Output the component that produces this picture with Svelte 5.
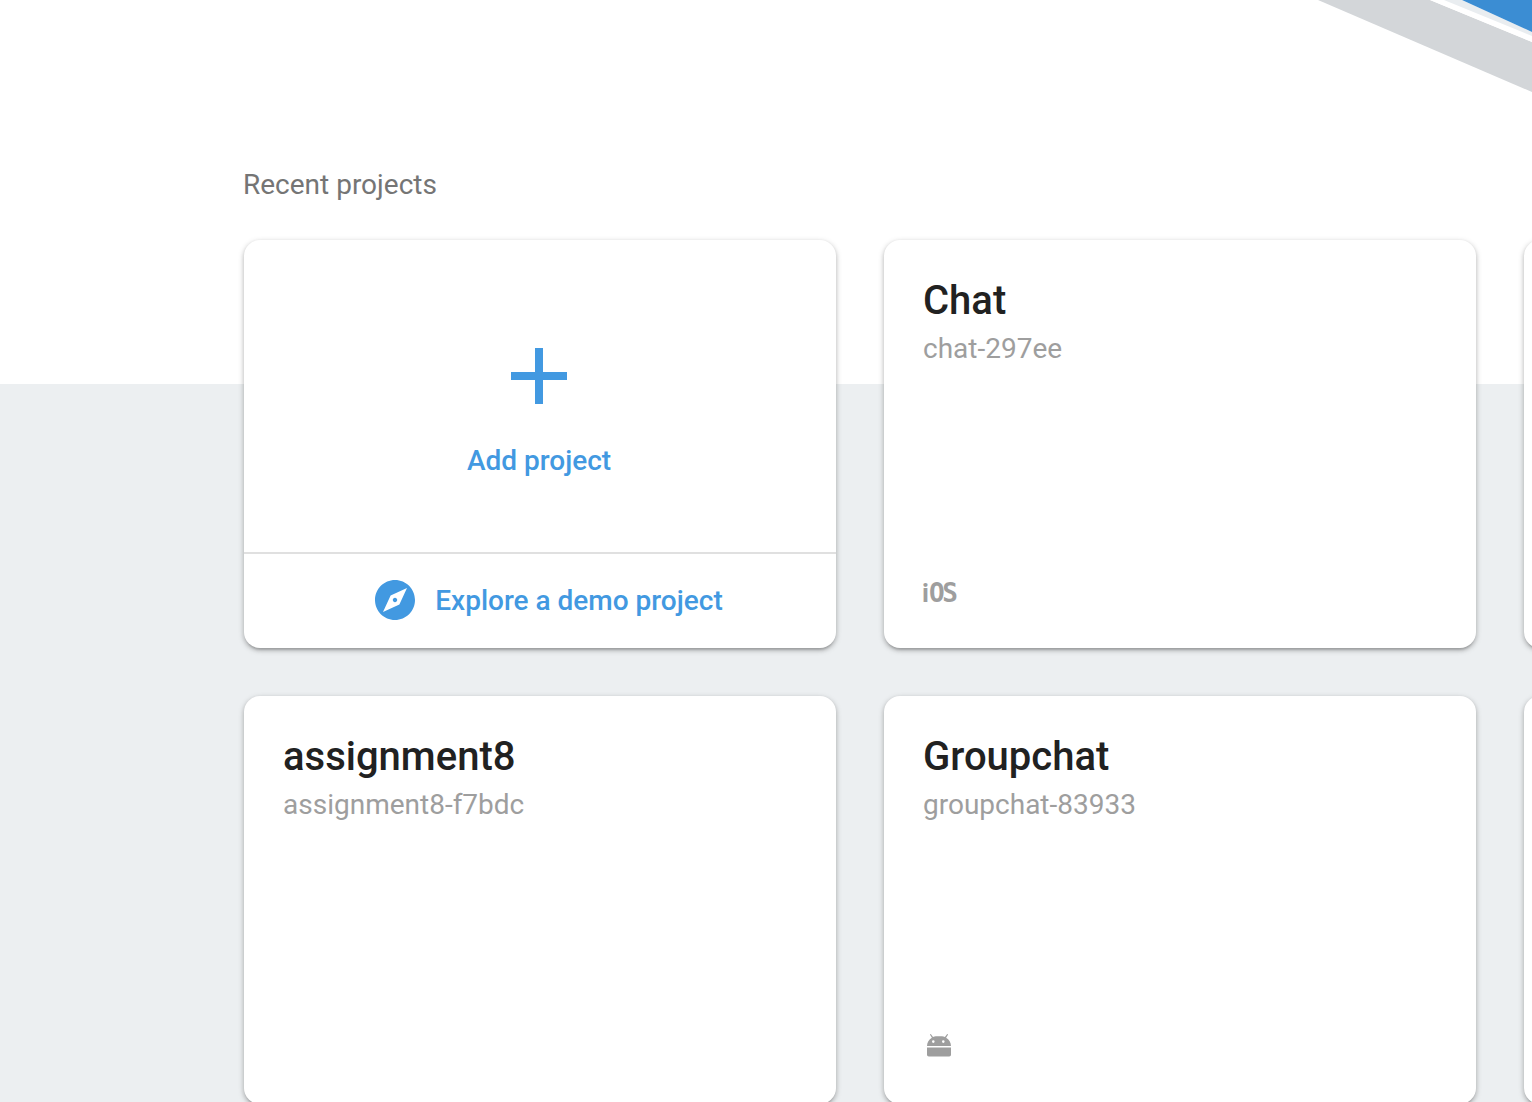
<script lang="ts">
  const projects = [
    { add: true },
    { name: "Chat", id: "chat-297ee", platform: "ios" },
    { name: "", id: "", platform: "" },
    { name: "assignment8", id: "assignment8-f7bdc", platform: "" },
    { name: "Groupchat", id: "groupchat-83933", platform: "android" },
    { name: "", id: "", platform: "" },
  ];
</script>

<div class="page">
  <svg class="swoosh" viewBox="0 0 252 110" width="252" height="110" aria-hidden="true">
    <polygon points="38,0 252,92 252,42 150,0" fill="#d3d6d9" />
    <polygon points="150,0 252,42 252,36 164,0" fill="#ffffff" />
    <polygon points="164,0 252,36 252,32 182,0" fill="#e9edf0" />
    <polygon points="182,0 252,32 252,0" fill="#3b8dd3" />
  </svg>

  <h1>Recent projects</h1>

  <div class="grid">
    {#each projects as project}
      {#if project.add}
        <div class="card add">
          <div class="add-main">
            <svg class="plus" viewBox="0 0 24 24" width="96" height="96"><path d="M19 13h-6v6h-2v-6H5v-2h6V5h2v6h6v2z" /></svg>
            <span>Add project</span>
          </div>
          <div class="demo">
            <svg viewBox="0 0 24 24" width="48" height="48"><path d="M12 10.9c-.61 0-1.1.49-1.1 1.1s.49 1.1 1.1 1.1c.61 0 1.1-.49 1.1-1.1s-.49-1.1-1.1-1.1zM12 2C6.48 2 2 6.48 2 12s4.48 10 10 10 10-4.48 10-10S17.52 2 12 2zm2.19 12.19L6 18l3.81-8.19L18 6l-3.81 8.19z" /></svg>
            <span>Explore a demo project</span>
          </div>
        </div>
      {:else}
        <div class="card">
          <div class="name">{project.name}</div>
          <div class="id">{project.id}</div>
          {#if project.platform === "ios"}
            <div class="platform ios"><span class="ios-i">i</span>OS</div>
          {:else if project.platform === "android"}
            <div class="platform android">
              <svg viewBox="0 0 32 32" width="32" height="32">
                <path d="M4 18c0-3.600 1.900-6.600 4.900-8.300L6.900 6.600l.9-.6 2.200 3.100c1.800-.8 3.800-.8 5.900-.8s4.100 0 6 .8L24.200 6l.9.6-2 3.100c3 1.700 4.900 4.700 4.900 8.300z M10.300 12.300a1.300 1.300 0 1 0 0 2.600 1.300 1.300 0 0 0 0-2.600z M20.300 12.300a1.300 1.300 0 1 0 0 2.600 1.300 1.300 0 0 0 0-2.600z" fill-rule="evenodd" />
                <path d="M4 19.500h24v7.200a1.800 1.800 0 0 1-1.800 1.800H5.800A1.800 1.800 0 0 1 4 26.700z" />
              </svg>
            </div>
          {/if}
        </div>
      {/if}
    {/each}
  </div>
</div>

<style>
  :global(body) {
    margin: 0;
  }

  .page {
    position: relative;
    box-sizing: border-box;
    height: 1102px;
    overflow: hidden;
    padding: 0 0 0 244px;
    background: linear-gradient(#ffffff 384px, #eceff1 384px);
    font-family: Roboto, "Liberation Sans", sans-serif;
  }

  .swoosh {
    position: absolute;
    top: 0;
    right: 0;
  }

  h1 {
    margin: 0 0 0 -1px;
    padding-top: 165px;
    height: 75px;
    font-size: 28px;
    font-weight: 400;
    line-height: 40px;
    color: #757575;
  }

  .grid {
    display: grid;
    grid-template-columns: repeat(3, 592px);
    grid-auto-rows: 408px;
    gap: 48px;
  }

  .card {
    position: relative;
    box-sizing: border-box;
    display: flex;
    flex-direction: column;
    padding: 37px 39px 40px;
    border-radius: 16px;
    background: #fff;
    box-shadow: 0 2px 4px rgba(0, 0, 0, 0.14), 0 4px 2px -2px rgba(0, 0, 0, 0.12), 0 2px 6px rgba(0, 0, 0, 0.2);
  }

  .name {
    margin-bottom: 4px;
    font-size: 40px;
    font-weight: 500;
    line-height: 48px;
    color: #212121;
  }

  .id {
    font-size: 28px;
    line-height: 40px;
    color: #9e9e9e;
  }

  .platform {
    display: flex;
    align-items: center;
    margin-top: auto;
    height: 32px;
    fill: #9e9e9e;
  }

  .android {
    margin-bottom: 4px;
  }

  .ios {
    margin-left: -1px;
    margin-bottom: -1px;
    font-family: "DejaVu Sans Mono", monospace;
    font-size: 26px;
    font-weight: 700;
    letter-spacing: -2.2px;
    color: #9e9e9e;
  }

  .ios-i {
    font-family: Roboto, sans-serif;
    letter-spacing: 0;
  }

  .add {
    padding: 0;
    color: #4299e1;
    fill: #4299e1;
    font-size: 28px;
    font-weight: 500;
  }

  .add-main {
    flex: 1;
    display: flex;
    flex-direction: column;
    align-items: center;
    padding: 88px 2px 0 0;
    line-height: 40px;
    border-bottom: 2px solid #e0e0e0;
  }

  .plus {
    margin-bottom: 17px;
  }

  .demo {
    display: flex;
    align-items: center;
    justify-content: center;
    gap: 16px;
    height: 92px;
    padding: 0 0 2px 14px;
  }
</style>
